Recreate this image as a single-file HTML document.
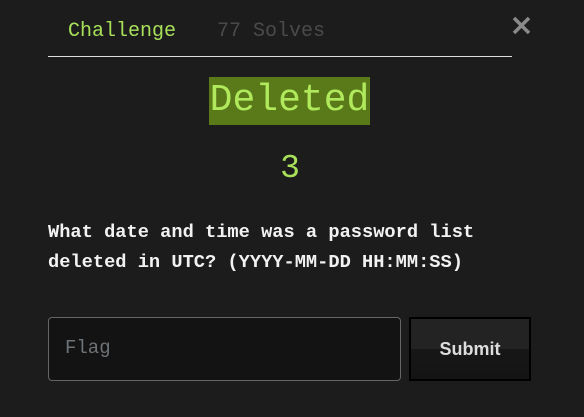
<!DOCTYPE html>
<html><head><style>
html,body{margin:0;padding:0;width:584px;height:417px;background:#1c1c1c;overflow:hidden;font-family:"Liberation Mono",monospace;}
.abs{position:absolute;}
</style></head><body>
<div class="abs" style="left:68px;top:20px;font-size:20px;color:#a9e05a;line-height:24px;">Challenge</div>
<div class="abs" style="left:217px;top:20px;font-size:20px;color:#4a4a4a;line-height:24px;">77 Solves</div>
<div class="abs" style="left:511px;top:10px;width:22px;height:30px;">
<svg width="22" height="30" viewBox="0 0 22 30"><path d="M3 8 L18 23 M18 8 L3 23" stroke="#8a8a8a" stroke-width="3.5"/></svg></div>
<div class="abs" style="left:48px;top:56px;width:464px;height:1px;background:#ddd;"></div>
<div class="abs" style="left:209px;top:77px;width:161px;height:48px;background:#5a7a1a;"></div>
<div class="abs" style="left:209px;top:77px;width:161px;height:48px;font-size:38px;line-height:48px;color:#b0ea5c;text-align:center;">Deleted</div>
<div class="abs" style="left:0;top:150px;width:580px;text-align:center;font-size:33px;line-height:38px;color:#a9e05a;">3</div>
<div class="abs" style="left:48px;top:217px;font-size:18.7px;line-height:30px;color:#f2f2f2;font-weight:bold;white-space:pre;">What date and time was a password list
deleted in UTC? (YYYY-MM-DD HH:MM:SS)</div>
<div class="abs" style="left:48px;top:317px;width:351px;height:62px;border:1px solid #666;border-radius:4px;background:#131313;"></div>
<div class="abs" style="left:65px;top:336px;font-size:19px;line-height:24px;color:#6e7378;">Flag</div>
<div class="abs" style="left:409px;top:317px;width:118px;height:60px;border:2px solid #000;background:linear-gradient(#232323 0,#232323 50%,#171717 50%,#141414 100%);color:#ddd;font-family:'Liberation Sans',sans-serif;font-weight:bold;font-size:18px;line-height:60px;text-align:center;">Submit</div>
</body></html>
